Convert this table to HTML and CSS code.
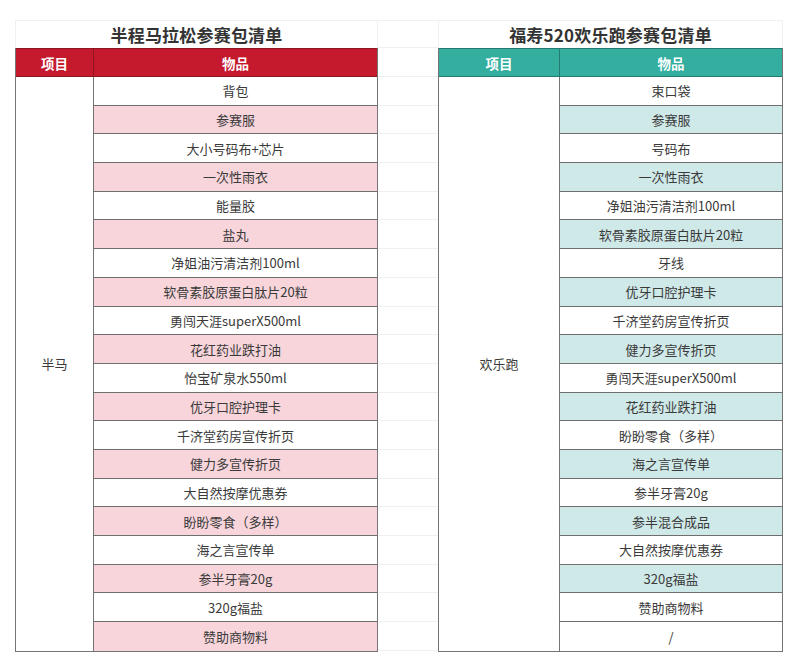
FILE: index.html
```html
<!DOCTYPE html>
<html lang="zh-CN">
<head>
<meta charset="utf-8">
<title>参赛包清单</title>
<link rel="stylesheet" href="styles.css">
</head>
<body>
<div class="sheet">
  <section class="block block-red">
    <div class="title">半程马拉松参赛包清单</div>
    <div class="table">
      <div class="th th-cat">项目</div>
      <div class="th th-item">物品</div>
      <div class="cat">半马</div>
      <div class="item">背包</div>
      <div class="item alt">参赛服</div>
      <div class="item">大小号码布+芯片</div>
      <div class="item alt">一次性雨衣</div>
      <div class="item">能量胶</div>
      <div class="item alt">盐丸</div>
      <div class="item">净姐油污清洁剂100ml</div>
      <div class="item alt">软骨素胶原蛋白肽片20粒</div>
      <div class="item">勇闯天涯superX500ml</div>
      <div class="item alt">花红药业跌打油</div>
      <div class="item">怡宝矿泉水550ml</div>
      <div class="item alt">优牙口腔护理卡</div>
      <div class="item">千济堂药房宣传折页</div>
      <div class="item alt">健力多宣传折页</div>
      <div class="item">大自然按摩优惠券</div>
      <div class="item alt">盼盼零食（多样）</div>
      <div class="item">海之言宣传单</div>
      <div class="item alt">参半牙膏20g</div>
      <div class="item">320g福盐</div>
      <div class="item alt last">赞助商物料</div>
    </div>
  </section>

  <div class="gap">
    <div class="g g-title"></div>
    <div class="g g-head"></div>
    <div class="g"></div><div class="g"></div><div class="g"></div><div class="g"></div><div class="g"></div>
    <div class="g"></div><div class="g"></div><div class="g"></div><div class="g"></div><div class="g"></div>
    <div class="g"></div><div class="g"></div><div class="g"></div><div class="g"></div><div class="g"></div>
    <div class="g"></div><div class="g"></div><div class="g"></div><div class="g"></div><div class="g"></div>
  </div>

  <section class="block block-teal">
    <div class="title">福寿520欢乐跑参赛包清单</div>
    <div class="table">
      <div class="th th-cat">项目</div>
      <div class="th th-item">物品</div>
      <div class="cat">欢乐跑</div>
      <div class="item">束口袋</div>
      <div class="item alt">参赛服</div>
      <div class="item">号码布</div>
      <div class="item alt">一次性雨衣</div>
      <div class="item">净姐油污清洁剂100ml</div>
      <div class="item alt">软骨素胶原蛋白肽片20粒</div>
      <div class="item">牙线</div>
      <div class="item alt">优牙口腔护理卡</div>
      <div class="item">千济堂药房宣传折页</div>
      <div class="item alt">健力多宣传折页</div>
      <div class="item">勇闯天涯superX500ml</div>
      <div class="item alt">花红药业跌打油</div>
      <div class="item">盼盼零食（多样）</div>
      <div class="item alt">海之言宣传单</div>
      <div class="item">参半牙膏20g</div>
      <div class="item alt">参半混合成品</div>
      <div class="item">大自然按摩优惠券</div>
      <div class="item alt">320g福盐</div>
      <div class="item">赞助商物料</div>
      <div class="item last">/</div>
    </div>
  </section>
</div>
</body>
</html>
```

FILE: styles.css
```css
* { box-sizing: border-box; }

html, body {
  margin: 0;
  padding: 0;
  background: #ffffff;
}

body {
  font-family: "Noto Sans CJK SC", "Noto Sans", "Liberation Sans", sans-serif;
  color: #3a3a3a;
  width: 800px;
  height: 672px;
  overflow: hidden;
}

.sheet {
  display: grid;
  grid-template-columns: 363px 60px 345px;
  padding: 20px 0 0 15px;
}

.title {
  height: 28px;
  display: flex;
  align-items: center;
  justify-content: center;
  font-size: 17px;
  font-weight: 700;
  color: #333333;
  border-top: 1px solid #f0f0f0;
  border-left: 1px solid #f0f0f0;
  border-right: 1px solid #f0f0f0;
  letter-spacing: 0.2px;
}

.table {
  display: grid;
  grid-template-rows: 29px repeat(20, 28.7px);
  border: 1px solid #747474;
  border-top: none;
}

.block-red .table { grid-template-columns: 77px 1fr; }
.block-teal .table { grid-template-columns: 120px 1fr; }

.th {
  display: flex;
  align-items: center;
  justify-content: center;
  color: #ffffff;
  font-size: 13.5px;
  font-weight: 700;
}

.block-red .th {
  background: #c5192d;
  border-top: 1px solid #8e1620;
  border-bottom: 1px solid #8e1620;
}
.block-red .th-item { border-left: 1px solid #8e1620; }

.block-teal .th {
  background: #33ae9f;
  border-top: 1px solid #237a70;
  border-bottom: 1px solid #237a70;
}
.block-teal .th-item { border-left: 1px solid #237a70; }

.cat {
  grid-row: 2 / span 20;
  grid-column: 1;
  display: flex;
  align-items: center;
  justify-content: center;
  font-size: 13px;
  background: #ffffff;
}

.item {
  grid-column: 2;
  display: flex;
  align-items: center;
  justify-content: center;
  font-size: 13px;
  background: #ffffff;
  border-left: 1px solid #747474;
  border-bottom: 1px solid #6e6e6e;
}

.item.last { border-bottom: none; }

.block-red .item.alt { background: #f7d5db; }
.block-teal .item.alt { background: #cfe8e8; }

.gap {
  display: grid;
  grid-template-rows: 28px 29px repeat(20, 28.7px);
}

.g {
  border-bottom: 1px solid #f0f0f0;
}

.g-title { border-top: 1px solid #f0f0f0; }
```
